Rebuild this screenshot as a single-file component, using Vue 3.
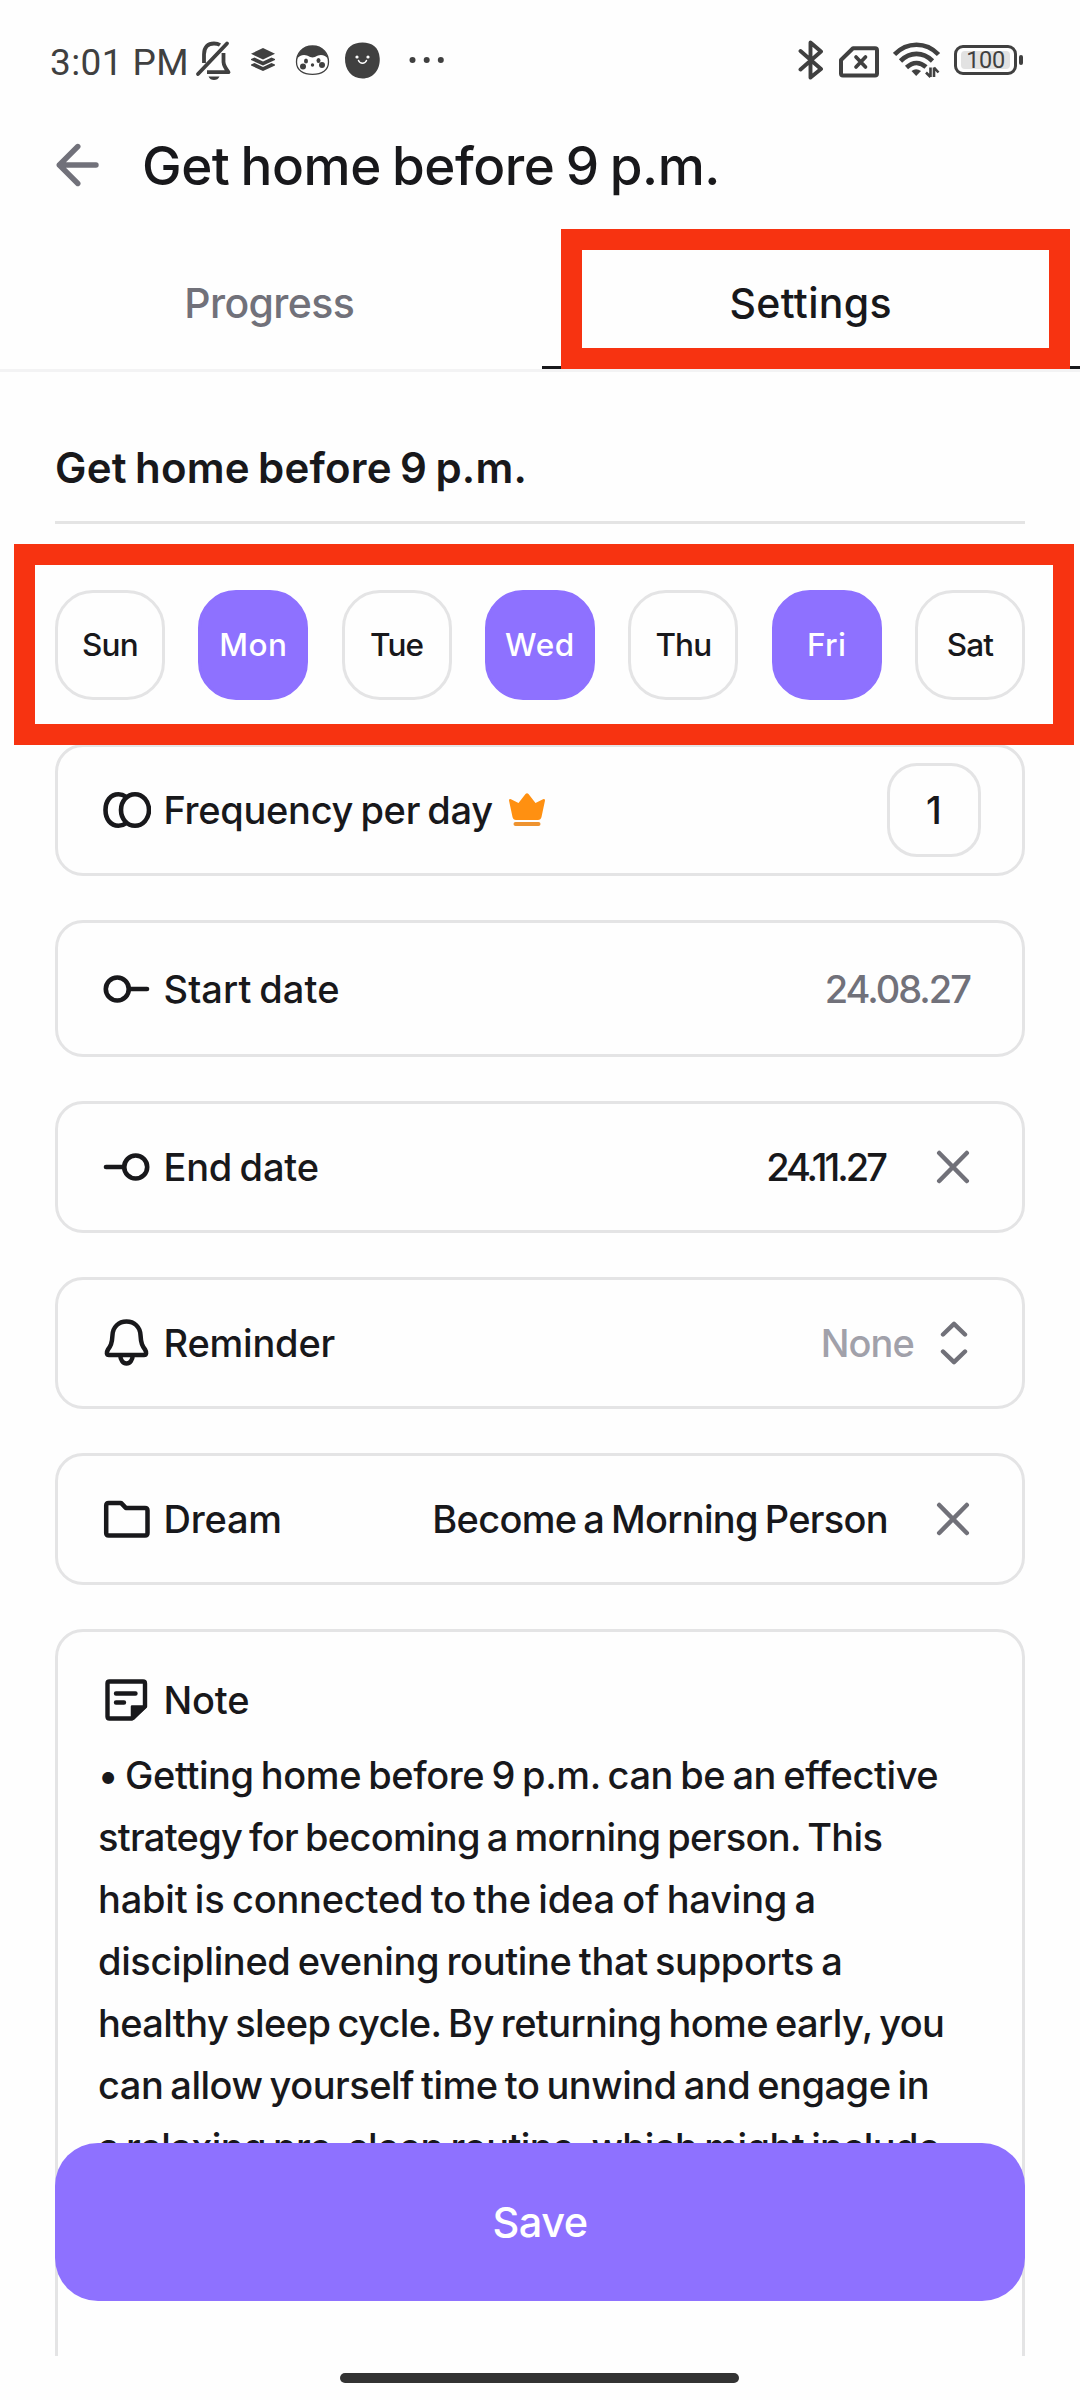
<script setup>
const days = [
  { name: 'Sun', on: false, spacing: -0.8 },
  { name: 'Mon', on: true, spacing: 0.5 },
  { name: 'Tue', on: false, spacing: -0.76 },
  { name: 'Wed', on: true, spacing: 0.6 },
  { name: 'Thu', on: false, spacing: -0.9 },
  { name: 'Fri', on: true, spacing: 0.3 },
  { name: 'Sat', on: false, spacing: -0.78 },
]

const noteLines = [
  { text: '• Getting home before 9 p.m. can be an effective', spacing: -0.42 },
  { text: 'strategy for becoming a morning person. This', spacing: -0.7 },
  { text: 'habit is connected to the idea of having a', spacing: -0.2 },
  { text: 'disciplined evening routine that supports a', spacing: -0.35 },
  { text: 'healthy sleep cycle. By returning home early, you', spacing: -0.6 },
  { text: 'can allow yourself time to unwind and engage in', spacing: -0.5 },
  { text: 'a relaxing pre-sleep routine, which might include', spacing: -0.58 },
]
</script>

<template>
  <div class="screen">
    <div class="status">
      <span class="clock">3:01 PM</span>
      <svg class="s-bell" width="38" height="42" viewBox="0 0 38 42" fill="none" stroke="#404040" stroke-width="3.8">
        <path d="M9 24V15.500C9 8 13 4.500 19 4.500C21.500 4.500 23.500 5 25 6" />
        <path d="M28.500 14V23C28.800 27 31 30 33.500 33.200H12" stroke-linejoin="round" />
        <path d="M3 35L32 4.500" stroke-linecap="round" />
        <path d="M13.500 37.500H24.500C23.500 40 21.500 41 19 41S14.500 40 13.500 37.500Z" fill="#404040" stroke="none" />
      </svg>
      <svg class="s-layers" width="26" height="24" viewBox="0 0 26 24" fill="#404040">
        <path d="M13 0L25 5.800L13 11.500L1 5.800Z" />
        <path d="M1 11L4.500 9.500L13 13.500L21.500 9.500L25 11V12L13 17.500L1 12Z" />
        <path d="M1 16.500L4.500 15L13 19L21.500 15L25 16.500V17.500L13 23L1 17.500Z" />
      </svg>
      <svg class="s-panda" width="35" height="31" viewBox="0 0 35 31">
        <path d="M17.500 1C28 1 33.500 9 33.500 17C33.500 25 27 29.300 17.500 29.300S1.500 25 1.500 17C1.500 9 7 1 17.500 1Z" fill="#fff" stroke="#404040" stroke-width="1.300" />
        <path d="M17.500 1C27 1 32 8 33 14C31 10.500 26.500 9 23 10.500C20.500 11.500 19 12.500 17.500 12.500S14.500 11.500 12 10.500C8.500 9 4 10.500 2 14C3 8 8 1 17.500 1Z" fill="#404040" />
        <g fill="#404040">
          <ellipse cx="11" cy="16" rx="2" ry="2.600" /><ellipse cx="23.500" cy="15.500" rx="2" ry="2.600" />
          <circle cx="8" cy="21.500" r="3" /><circle cx="27" cy="20" r="3" />
          <circle cx="17.500" cy="20" r="1.700" />
        </g>
      </svg>
      <svg class="s-blob" width="37" height="37" viewBox="0 0 37 37">
        <path d="M18.500.500C28 .500 35 5 35.700 16C36.500 28 29 36.500 18.500 36.500S.500 28 1 16C1.700 5 9 .500 18.500 .500Z" fill="#404040" />
        <circle cx="13" cy="15" r="1.600" fill="#fff" /><circle cx="24" cy="15" r="1.600" fill="#fff" />
        <path d="M14.500 18.500C16 22 21 22 22.500 18.500" fill="none" stroke="#fff" stroke-width="1.500" stroke-linecap="round" />
      </svg>
      <svg class="s-dots" width="36" height="8" viewBox="0 0 36 8" fill="#404040">
        <circle cx="3.500" cy="4" r="3" /><circle cx="17.700" cy="4" r="3" /><circle cx="31.800" cy="4" r="3" />
      </svg>

      <svg class="s-bt" width="26" height="40" viewBox="0 0 26 40" fill="none" stroke="#404040" stroke-width="3.900" stroke-linejoin="round" stroke-linecap="round">
        <path d="M2.500 11L23 29L12.500 37.500V2.500L23 11.500L2.500 29.500" />
      </svg>
      <svg class="s-sim" width="40" height="32" viewBox="0 0 40 32" fill="none" stroke="#404040" stroke-width="4">
        <path d="M14 2.200H36Q38 2.200 38 4.200V27.500Q38 29.500 36 29.500H4Q2 29.500 2 27.500V14Z" stroke-linejoin="round" />
        <path d="M17 11L26.500 21M26.500 11L17 21" stroke-width="3.700" stroke-linecap="round" />
      </svg>
      <svg class="s-wifi" width="48" height="36" viewBox="0 0 48 36" fill="none" stroke="#404040" stroke-width="4.600">
        <path d="M1.500 12.500C14-.500 33-.500 45.500 12.500" />
        <path d="M7.500 19C17 9.500 30 9.500 39.500 19" />
        <path d="M13.500 25.500C20 19.500 27 19.500 33 25" />
        <path d="M18.500 29Q23 25.500 28 29L23.200 34Z" fill="#404040" stroke="none" />
        <path d="M37.500 25.500V35M41 35V25.500M33 30.500L37.500 35M41 25.500L45.500 30.500" stroke-width="2.600" />
      </svg>
      <span class="battery"><span class="charge">100</span></span>
      <span class="nub"></span>
    </div>

    <header class="header">
      <svg width="45" height="44" viewBox="0 0 45 44" fill="none" stroke="#71717a" stroke-width="5.400" stroke-linecap="round" stroke-linejoin="round">
        <path d="M22.800 3.500L4.300 22L22.800 40.500M4.300 22H41" />
      </svg>
      <h1>Get home before 9 p.m.</h1>
    </header>

    <nav class="tabs">
      <div class="tab progress"><span>Progress</span></div>
      <div class="tab active">Settings</div>
      <div class="mark mark-tab"></div>
    </nav>

    <div class="title"><span>Get home before 9 p.m.</span></div>

    <div class="days">
      <div v-for="d in days" :key="d.name" class="day" :class="{ on: d.on }">
        <span :style="{ letterSpacing: d.spacing + 'px' }">{{ d.name }}</span>
      </div>
      <div class="mark mark-days"></div>
    </div>

    <main class="cards">
      <section class="card">
        <svg class="ico" width="54" height="48" viewBox="0 0 54 48" fill="none" stroke="#18181b" stroke-width="4.600">
          <path d="M28.500 10.500C26 8.500 23.500 8.200 21.500 8.200C13.500 8.200 8.500 15 8.500 24S13.500 39.800 21.500 39.800C23.500 39.800 26 39.500 28.500 37.500" />
          <ellipse cx="38" cy="24" rx="14" ry="15.800" />
        </svg>
        <span class="label freq">Frequency per day</span>
        <svg class="crown" width="38" height="36" viewBox="0 0 38 36">
          <path d="M1 8.500Q1 6.500 3 7.200L10.500 11L17.500 2Q19 .300 20.500 2L27.500 11L35 7.200Q37 6.500 37 8.500L33.500 25Q32.800 28 30 28H8Q5.200 28 4.500 25Z" fill="#ff9011" />
          <rect x="5.500" y="30" width="27" height="4" rx="2" fill="#ee9330" />
        </svg>
        <span class="count">1</span>
      </section>

      <section class="card tall">
        <svg class="ico" width="54" height="48" viewBox="0 0 54 48" fill="none" stroke="#18181b" stroke-width="4.600" stroke-linecap="round">
          <circle cx="20.300" cy="24" r="11.500" /><path d="M32 24H50" />
        </svg>
        <span class="label start">Start date</span>
        <span class="value d1">24.08.27</span>
      </section>

      <section class="card">
        <svg class="ico" width="54" height="48" viewBox="0 0 54 48" fill="none" stroke="#18181b" stroke-width="4.600" stroke-linecap="round">
          <circle cx="38.700" cy="24" r="11.500" /><path d="M9 24H27" />
        </svg>
        <span class="label">End date</span>
        <span class="value d2">24.11.27</span>
        <svg class="x" width="34" height="34" viewBox="0 0 34 34" stroke="#717179" stroke-width="4.500" stroke-linecap="round"><path d="M3.200 3L30.800 31M30.800 3L3.200 31" /></svg>
      </section>

      <section class="card">
        <svg class="ico" width="54" height="52" viewBox="0 0 54 52" fill="none" stroke="#18181b" stroke-width="4.500" stroke-linejoin="round">
          <path d="M29.500 4.500C37.500 4.500 43 10 43.500 18C44 27 45.500 29 48 32.500C49.800 35.500 49.500 38 47 38H12C9.500 38 9.200 35.500 11 32.500C13.500 29 15 27 15.500 18C16 10 21.500 4.500 29.500 4.500Z" />
          <path d="M23.200 38C23.500 43 26 46.500 29.500 46.500S35.500 43 35.800 38" />
        </svg>
        <span class="label">Reminder</span>
        <span class="value none">None</span>
        <svg class="chev" width="28" height="46" viewBox="0 0 28 46" fill="none" stroke="#717179" stroke-width="4.400" stroke-linecap="round" stroke-linejoin="round"><path d="M3 14.500L14 3.800L25 14.500M3 31.500L14 42.200L25 31.500" /></svg>
      </section>

      <section class="card">
        <svg class="ico" width="54" height="48" viewBox="0 0 54 48" fill="none" stroke="#18181b" stroke-width="4.500" stroke-linejoin="round">
          <path d="M11.700 7.900H24L28.800 12.900H48Q50.500 12.900 50.500 15.400V38Q50.500 40.500 48 40.500H11.700Q9.200 40.500 9.200 38V10.400Q9.200 7.900 11.700 7.900Z" />
        </svg>
        <span class="label dream">Dream</span>
        <span class="value person">Become a Morning Person</span>
        <svg class="x" width="34" height="34" viewBox="0 0 34 34" stroke="#717179" stroke-width="4.500" stroke-linecap="round"><path d="M3.200 3L30.800 31M30.800 3L3.200 31" /></svg>
      </section>

      <section class="note">
        <div class="note-head">
          <svg class="ico" width="54" height="48" viewBox="0 0 54 48" fill="none" stroke="#18181b" stroke-width="4.400" stroke-linejoin="round">
            <path d="M12.500 5.500H46Q48 5.500 48 7.500V30.500L35 42.500H12.500Q10.500 42.500 10.500 40.500V7.500Q10.500 5.500 12.500 5.500Z" />
            <path d="M35 30.500H48V31L36.500 42.500H35Z" fill="#18181b" stroke-width="2.500" />
            <path d="M19 17.500H38.500M19 26.500H27" stroke-linecap="round" />
          </svg>
          <span class="label">Note</span>
        </div>
        <div class="note-body">
          <div v-for="l in noteLines" :key="l.text" :style="{ letterSpacing: l.spacing + 'px' }">{{ l.text }}</div>
        </div>
      </section>
    </main>

    <button class="save">Save</button>
    <div class="home-area"><div class="home-bar"></div></div>
  </div>
</template>

<style>
body { margin: 0; background: #fefefe; }
</style>

<style scoped>
.screen {
  position: relative;
  width: 1080px;
  height: 2400px;
  overflow: hidden;
  display: flex;
  flex-direction: column;
  box-sizing: border-box;
  background: #fefefe;
  color: #18181b;
  font-family: Inter, "Liberation Sans", sans-serif;
  font-weight: 500;
  font-size: 38px;
  word-spacing: -2.500px;
}
.screen * { box-sizing: border-box; }
svg { display: block; flex: none; }

.status {
  height: 120px;
  flex: none;
  display: flex;
  align-items: center;
  padding: 0 57px 0 50px;
  color: #404040;
}
.clock {
  width: 144px;
  font-family: Roboto, sans-serif;
  font-size: 37px;
  font-weight: 450;
  letter-spacing: .4px;
  word-spacing: 0;
  line-height: 40px;
  margin-top: 5px;
  white-space: nowrap;
}
.s-bell { margin-left: 1px; }
.s-layers { margin-left: 17px; }
.s-panda { margin-left: 19px; }
.s-blob { margin-left: 14px; }
.s-dots { margin-left: 28px; margin-right: auto; }
.s-sim { margin-left: 15px; margin-top: 3px; }
.s-wifi { margin-left: 14px; }
.battery {
  margin-left: 13px;
  width: 63px;
  height: 30px;
  border: 3px solid #404040;
  border-radius: 9px;
  padding: 3px 4px;
  display: flex;
}
.charge {
  flex: 1;
  border-radius: 4px;
  background: #e2e2e2;
  text-align: center;
  font: 400 23.500px/19px Roboto, sans-serif;
  letter-spacing: -.3px;
}
.nub { width: 4px; height: 10px; margin-left: 2px; border-radius: 2px; background: #404040; }

.header {
  height: 120px;
  flex: none;
  display: flex;
  align-items: center;
  padding: 0 0 30px 55px;
}
h1 {
  margin: 1px 0 0 42px;
  font-size: 53px;
  line-height: 60px;
  font-weight: 500;
  letter-spacing: -.46px;
}

.tabs {
  position: relative;
  flex: none;
  height: 132px;
  display: flex;
  border-bottom: 3px solid #f3f3f4;
}
.tab {
  flex: 1;
  height: 129px;
  border-bottom: 3px solid transparent;
  display: flex;
  align-items: center;
  justify-content: center;
  font-size: 41px;
}
.progress { color: #71717a; letter-spacing: -.6px; padding-right: 3px; }
.active { border-bottom-color: #18181b; letter-spacing: .35px; }
.mark { position: absolute; border: 21.500px solid #f73311; pointer-events: none; }
.mark-tab { left: 561px; top: -11.500px; width: 509px; height: 140.500px; }
.mark-days { left: 14px; top: -46.500px; width: 1060px; height: 201.300px; }

.title {
  flex: none;
  margin: 0 55px;
  height: 152px;
  padding-top: 69px;
  border-bottom: 3px solid #e4e4e4;
  font-size: 42px;
  line-height: 54px;
  font-weight: 600;
  letter-spacing: .2px;
}

.days {
  position: relative;
  flex: none;
  height: 110px;
  margin-top: 66px;
  padding: 0 55px;
  display: flex;
  justify-content: space-between;
}
.day {
  width: 110px;
  height: 110px;
  border: 3px solid #e4e4e5;
  border-radius: 38px;
  display: flex;
  align-items: center;
  justify-content: center;
  padding-bottom: 1px;
  font-size: 31.500px;
}
.day.on { background: #8e71ff; border-color: #8e71ff; color: #fff; }

.cards {
  flex: none;
  height: 1612px;
  margin-top: 44px;
  padding: 0 55px;
  overflow: hidden;
  display: flex;
  flex-direction: column;
  gap: 44px;
}
.card {
  flex: none;
  height: 132px;
  border: 3px solid #e4e4e5;
  border-radius: 28px;
  display: flex;
  align-items: center;
  padding: 0 52px 0 39px;
}
.card.tall { height: 137px; }
.label { margin-left: 12.500px; white-space: nowrap; letter-spacing: -.2px; }
.freq { letter-spacing: -.3px; }
.start { letter-spacing: .1px; }
.value { margin-left: auto; white-space: nowrap; }
.crown { margin-left: 15px; }
.count {
  margin-left: auto;
  margin-right: -11px;
  width: 94px;
  height: 94px;
  border: 3px solid #e4e4e5;
  border-radius: 30px;
  display: flex;
  align-items: center;
  justify-content: center;
}
.d1 { color: #71717a; letter-spacing: -2px; }
.d2 { letter-spacing: -3px; }
.none { color: #a1a1aa; letter-spacing: -.9px; }
.person { letter-spacing: -.7px; }
.x { margin-left: 48px; }
.value.d2 + .x { margin-left: 51px; }
.chev { margin-left: 26px; margin-right: 2px; }

.note {
  flex: none;
  height: 900px;
  border: 3px solid #e4e4e5;
  border-radius: 28px;
  padding: 44px 39px;
}
.note-head { display: flex; align-items: center; height: 48px; }
.note-body { margin-top: 20px; line-height: 62px; white-space: nowrap; padding-left: 1px; }

.save {
  position: absolute;
  left: 55px;
  top: 2143px;
  width: 970px;
  height: 158px;
  border: 0;
  border-radius: 43px;
  background: #8e71ff;
  color: #fff;
  font: 500 41.500px/48px Inter, sans-serif;
  letter-spacing: -.5px;
}
.home-area { flex: 1; display: flex; justify-content: center; padding: 17px 2px 0 0; }
.home-bar { width: 399px; height: 10px; border-radius: 5px; background: #333; }
</style>
